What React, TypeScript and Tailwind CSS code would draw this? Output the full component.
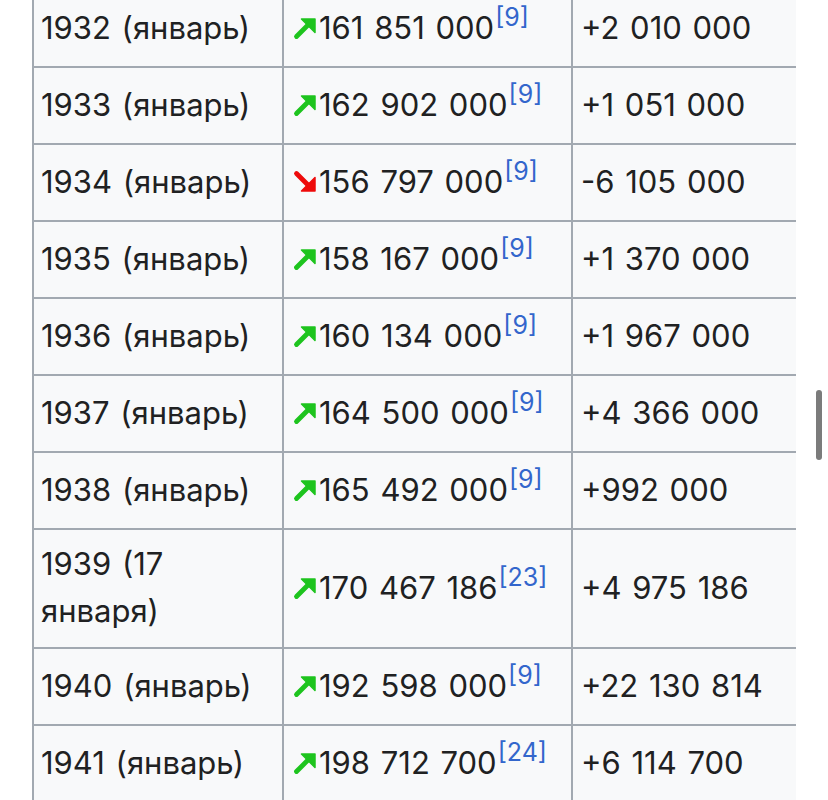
import React from 'react'

type Row = {
  year: string
  up: boolean
  value: string
  ref: string
  diff: string
  tall?: boolean
}

const rows: Row[] = [
  { year: '1932 (январь)', up: true, value: '161 851 000', ref: '9', diff: '+2 010 000' },
  { year: '1933 (январь)', up: true, value: '162 902 000', ref: '9', diff: '+1 051 000' },
  { year: '1934 (январь)', up: false, value: '156 797 000', ref: '9', diff: '-6 105 000' },
  { year: '1935 (январь)', up: true, value: '158 167 000', ref: '9', diff: '+1 370 000' },
  { year: '1936 (январь)', up: true, value: '160 134 000', ref: '9', diff: '+1 967 000' },
  { year: '1937 (январь)', up: true, value: '164 500 000', ref: '9', diff: '+4 366 000' },
  { year: '1938 (январь)', up: true, value: '165 492 000', ref: '9', diff: '+992 000' },
  { year: '1939 (17 января)', up: true, value: '170 467 186', ref: '23', diff: '+4 975 186', tall: true },
  { year: '1940 (январь)', up: true, value: '192 598 000', ref: '9', diff: '+22 130 814' },
  { year: '1941 (январь)', up: true, value: '198 712 700', ref: '24', diff: '+6 114 700' },
]

// wiki-style trend arrows
function Arrow({ up }: { up: boolean }) {
  if (up) {
    return (
      <svg width="26" height="24" viewBox="0 0 26 24" className="inline-block align-[-1px] mr-[1px]">
        <path d="M4.5 20.5 L16 9" stroke="#1ec41e" strokeWidth="4.8" strokeLinecap="round" />
        <path d="M9.5 3 L23 3 L23 16.5 Z" fill="#1ec41e" stroke="#1ec41e" strokeWidth="1.5" strokeLinejoin="round" />
      </svg>
    )
  }
  return (
    <svg width="26" height="24" viewBox="0 0 26 24" className="inline-block align-[-1px] mr-[1px]">
      <path d="M4.5 3.5 L16 15" stroke="#ee0b0b" strokeWidth="4.8" strokeLinecap="round" />
      <path d="M9.5 21 L23 21 L23 7.5 Z" fill="#ee0b0b" stroke="#ee0b0b" strokeWidth="1.5" strokeLinejoin="round" />
    </svg>
  )
}

export default function App() {
  return (
    <div
      className="relative w-[828px] h-[800px] overflow-hidden bg-white text-[#202122]"
      style={{ fontFamily: 'Inter, "Noto Sans", sans-serif' }}
    >
      {/* table, clipped on the right */}
      <div className="ml-[32px] w-[764px] overflow-hidden -mt-[11px]">
        <table className="w-[820px] border-collapse bg-[#f8f9fa] text-[31px] leading-[47px] [word-spacing:2px]">
          <colgroup>
            <col className="w-[250px]" />
            <col className="w-[289px]" />
            <col />
          </colgroup>
          <tbody>
            {rows.map((r) => (
              <tr key={r.year} className="h-[77px]">
                <td className="border-2 border-[#a2a9b1] pl-[7px] pr-2 pt-[10px] pb-[13px] align-middle">
                  {r.tall ? (
                    <>
                      1939 (17
                      <br />
                      января)
                    </>
                  ) : (
                    r.year
                  )}
                </td>
                <td className="border-2 border-[#a2a9b1] pl-[8px] pt-[10px] pb-[13px] align-middle whitespace-nowrap">
                  <Arrow up={r.up} />
                  {r.value}
                  <sup className="text-[25px] text-[#3366cc] top-[-13px] ml-[1px]">[{r.ref}]</sup>
                </td>
                <td className="border-2 border-[#a2a9b1] pl-[8px] pt-[10px] pb-[13px] align-middle whitespace-nowrap">
                  {r.diff}
                </td>
              </tr>
            ))}
          </tbody>
        </table>
      </div>

      {/* scroll indicator */}
      <div className="absolute left-[816px] top-[390px] w-[6px] h-[70px] rounded-full bg-[#7b7b7b]" />
    </div>
  )
}
